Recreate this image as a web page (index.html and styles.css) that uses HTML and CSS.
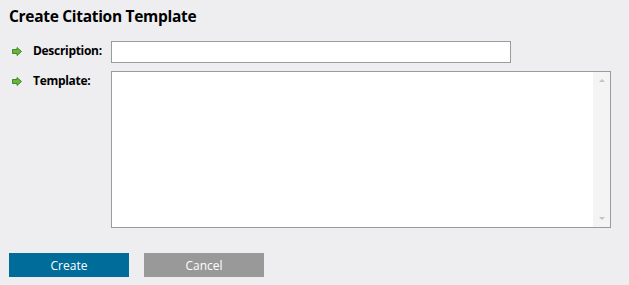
FILE: index.html
```html
<!DOCTYPE html>
<html>
<head>
    <title>Create Citation Template</title>
    <link rel="stylesheet" href="styles.css">
</head>
<body>

<h2 class="title">Create Citation Template</h2>

<div class="form">
    <div class="row">
        <span class="arrow"><svg width="10" height="9" viewBox="0 0 10 9"><path d="M0.5 2.5 H5 V0.5 L9.5 4.5 L5 8.5 V6.5 H0.5 Z" fill="#6bb33f" stroke="#3f8a25" stroke-width="1"/></svg></span>
        <label class="label" for="desc">Description:</label>
        <input class="field" type="text" id="desc">
    </div>
    <div class="row">
        <span class="arrow"><svg width="10" height="9" viewBox="0 0 10 9"><path d="M0.5 2.5 H5 V0.5 L9.5 4.5 L5 8.5 V6.5 H0.5 Z" fill="#6bb33f" stroke="#3f8a25" stroke-width="1"/></svg></span>
        <label class="label" for="tpl">Template:</label>
        <div class="area">
            <textarea id="tpl"></textarea>
            <div class="scroll">
                <span class="tri up"></span>
                <span class="tri down"></span>
            </div>
        </div>
    </div>
</div>

<div class="buttons">
    <button class="btn btn-create">Create</button>
    <button class="btn btn-cancel">Cancel</button>
</div>

</body>
</html>
```

FILE: styles.css
```css
body {
    margin: 0;
    padding: 6px 9px 0 9px;
    background-color: #eeeef1;
    font-family: "Open Sans", "Noto Sans", sans-serif;
    color: #000;
}
.title {
    margin: 0;
    font-size: 15.5px;
    font-weight: bold;
    line-height: 20px;
    letter-spacing: -0.3px;
}
.form {
    margin-top: 15px;
}
.row {
    display: flex;
    align-items: flex-start;
    margin-bottom: 8px;
}
.arrow {
    width: 24px;
    padding-left: 3px;
    padding-top: 6px;
    box-sizing: border-box;
    line-height: 0;
}
.label {
    width: 78px;
    font-size: 12px;
    font-weight: bold;
    line-height: 18px;
    padding-top: 1px;
    letter-spacing: -0.3px;
}
.field {
    width: 400px;
    height: 22px;
    box-sizing: border-box;
    border: 1px solid #9a9a9a;
    background: #fff;
    margin: 0;
    padding: 2px 4px;
}
.area {
    display: flex;
    width: 500px;
    height: 157px;
    box-sizing: border-box;
    border: 1px solid #9a9a9a;
    background: #fff;
}
.area textarea {
    flex: 1;
    border: none;
    resize: none;
    outline: none;
    margin: 0;
    padding: 2px 4px;
    overflow: hidden;
}
.scroll {
    width: 17px;
    background-color: #f4f4f5;
    display: flex;
    flex-direction: column;
    justify-content: space-between;
    align-items: center;
    padding: 7px 0;
}
.tri {
    width: 0;
    height: 0;
    border-left: 3px solid transparent;
    border-right: 3px solid transparent;
}
.tri.up {
    border-bottom: 3px solid #c4c4c4;
}
.tri.down {
    border-top: 3px solid #c4c4c4;
}
.buttons {
    display: flex;
    gap: 15px;
    margin-top: 25px;
}
.btn {
    width: 120px;
    height: 24px;
    border: none;
    color: #fff;
    font-family: "Open Sans", "Noto Sans", sans-serif;
    font-size: 12px;
    cursor: pointer;
    padding: 0;
}
.btn-create {
    background-color: #006c99;
}
.btn-cancel {
    background-color: #999999;
}
```
